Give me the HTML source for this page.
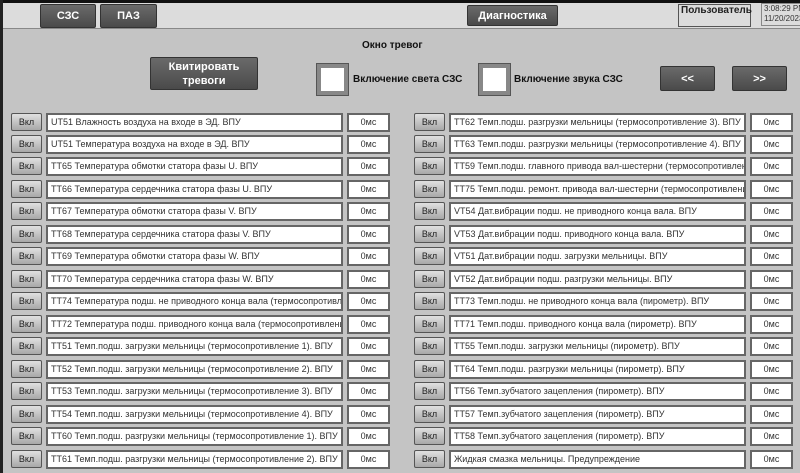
<!DOCTYPE html>
<html><head><meta charset="utf-8"><style>
*{box-sizing:border-box;margin:0;padding:0}
body{width:800px;height:473px;overflow:hidden;background:#c4c4c4;font-family:"Liberation Sans","DejaVu Sans",sans-serif;position:relative}
.a{position:absolute}
.top{left:0;top:0;width:800px;height:3px;background:#111}
.lb{left:0;top:0;width:3px;height:473px;background:#222}
.hdr{left:3px;top:3px;width:797px;height:26px;background:#dcdcdc;border-bottom:1px solid #888}
.db{background:linear-gradient(#6a6a6a,#4a4a4a);color:#fff;font-weight:bold;font-size:11px;border:1px solid #333;border-radius:2px;display:flex;align-items:center;justify-content:center;text-align:center;line-height:14px}
.chk{width:33px;height:33px;background:#888;border:1px solid #555;padding:4px}
.chk div{width:100%;height:100%;background:#fff}
.lbl{font-size:10px;font-weight:bold;color:#111}
.v{width:31px;height:18px;background:linear-gradient(#e0e0e0,#a8a8a8);border:1px solid #555;border-radius:2px;font-size:9px;color:#222;text-align:center;line-height:16px}
.t{height:19px;background:#fff;border:2px solid #666;font-size:9px;color:#333;line-height:15px;padding-left:3px;white-space:nowrap;overflow:hidden}
.m{height:19px;background:#fff;border:2px solid #666;font-size:9px;color:#333;line-height:15px;text-align:center}
</style></head><body>
<div class="a hdr"></div>
<div class="a top"></div>
<div class="a lb"></div>
<div class="a db" style="left:40px;top:4px;width:56px;height:24px">СЗС</div>
<div class="a db" style="left:100px;top:4px;width:57px;height:24px">ПАЗ</div>
<div class="a db" style="left:467px;top:5px;width:91px;height:21px">Диагностика</div>
<div class="a" style="left:678px;top:4px;width:73px;height:23px;border:1px solid #555;font-size:10px;font-weight:bold;color:#222;padding-left:2px;line-height:12px">Пользователь</div>
<div class="a" style="left:761px;top:3px;width:40px;height:23px;font-size:8px;color:#333;line-height:10px;border:1px solid #888;padding-left:2px;white-space:nowrap;overflow:hidden">3:08:29 PM<br>11/20/2023</div>
<div class="a lbl" style="left:362px;top:40px">Окно тревог</div>
<div class="a db" style="left:150px;top:57px;width:108px;height:33px">Квитировать<br>тревоги</div>
<div class="a chk" style="left:316px;top:63px"><div></div></div>
<div class="a lbl" style="left:353px;top:74px">Включение света СЗС</div>
<div class="a chk" style="left:478px;top:63px"><div></div></div>
<div class="a lbl" style="left:514px;top:74px">Включение звука СЗС</div>
<div class="a db" style="left:660px;top:66px;width:55px;height:25px">&lt;&lt;</div>
<div class="a db" style="left:732px;top:66px;width:55px;height:25px">&gt;&gt;</div>
<div id="rows"></div>
<script>
var L=["UT51 Влажность воздуха на входе в ЭД. ВПУ","UT51 Температура воздуха на входе в ЭД. ВПУ","TT65 Температура обмотки статора фазы U. ВПУ","TT66 Температура сердечника статора фазы U. ВПУ","TT67 Температура обмотки статора фазы V. ВПУ","TT68 Температура сердечника статора фазы V. ВПУ","TT69 Температура обмотки статора фазы W. ВПУ","TT70 Температура сердечника статора фазы W. ВПУ","TT74 Температура подш. не приводного конца вала (термосопротивление). ВПУ","TT72 Температура подш. приводного конца вала (термосопротивление). ВПУ","TT51 Темп.подш. загрузки мельницы (термосопротивление 1). ВПУ","TT52 Темп.подш. загрузки мельницы (термосопротивление 2). ВПУ","TT53 Темп.подш. загрузки мельницы (термосопротивление 3). ВПУ","TT54 Темп.подш. загрузки мельницы (термосопротивление 4). ВПУ","TT60 Темп.подш. разгрузки мельницы (термосопротивление 1). ВПУ","TT61 Темп.подш. разгрузки мельницы (термосопротивление 2). ВПУ"];
var R=["TT62 Темп.подш. разгрузки мельницы (термосопротивление 3). ВПУ","TT63 Темп.подш. разгрузки мельницы (термосопротивление 4). ВПУ","TT59 Темп.подш. главного привода вал-шестерни (термосопротивление). ВПУ","TT75 Темп.подш. ремонт. привода вал-шестерни (термосопротивление). ВПУ","VT54 Дат.вибрации подш. не приводного конца вала. ВПУ","VT53 Дат.вибрации подш. приводного конца вала. ВПУ","VT51 Дат.вибрации подш. загрузки мельницы. ВПУ","VT52 Дат.вибрации подш. разгрузки мельницы. ВПУ","TT73 Темп.подш. не приводного конца вала (пирометр). ВПУ","TT71 Темп.подш. приводного конца вала (пирометр). ВПУ","TT55 Темп.подш. загрузки мельницы (пирометр). ВПУ","TT64 Темп.подш. разгрузки мельницы (пирометр). ВПУ","TT56 Темп.зубчатого зацепления (пирометр). ВПУ","TT57 Темп.зубчатого зацепления (пирометр). ВПУ","TT58 Темп.зубчатого зацепления (пирометр). ВПУ","Жидкая смазка мельницы. Предупреждение"];
var h="";
for(var i=0;i<16;i++){var y=Math.round(112.5+i*22.47);
[[11,L[i]],[414,R[i]]].forEach(function(c){var x=c[0];
h+='<div class="a v" style="left:'+x+'px;top:'+y+'px">Вкл</div>';
h+='<div class="a t" style="left:'+(x+35)+'px;top:'+y+'px;width:297px">'+c[1]+'</div>';
h+='<div class="a m" style="left:'+(x+336)+'px;top:'+y+'px;width:43px">0мс</div>';});}
document.getElementById("rows").innerHTML=h;
</script>
</body></html>
